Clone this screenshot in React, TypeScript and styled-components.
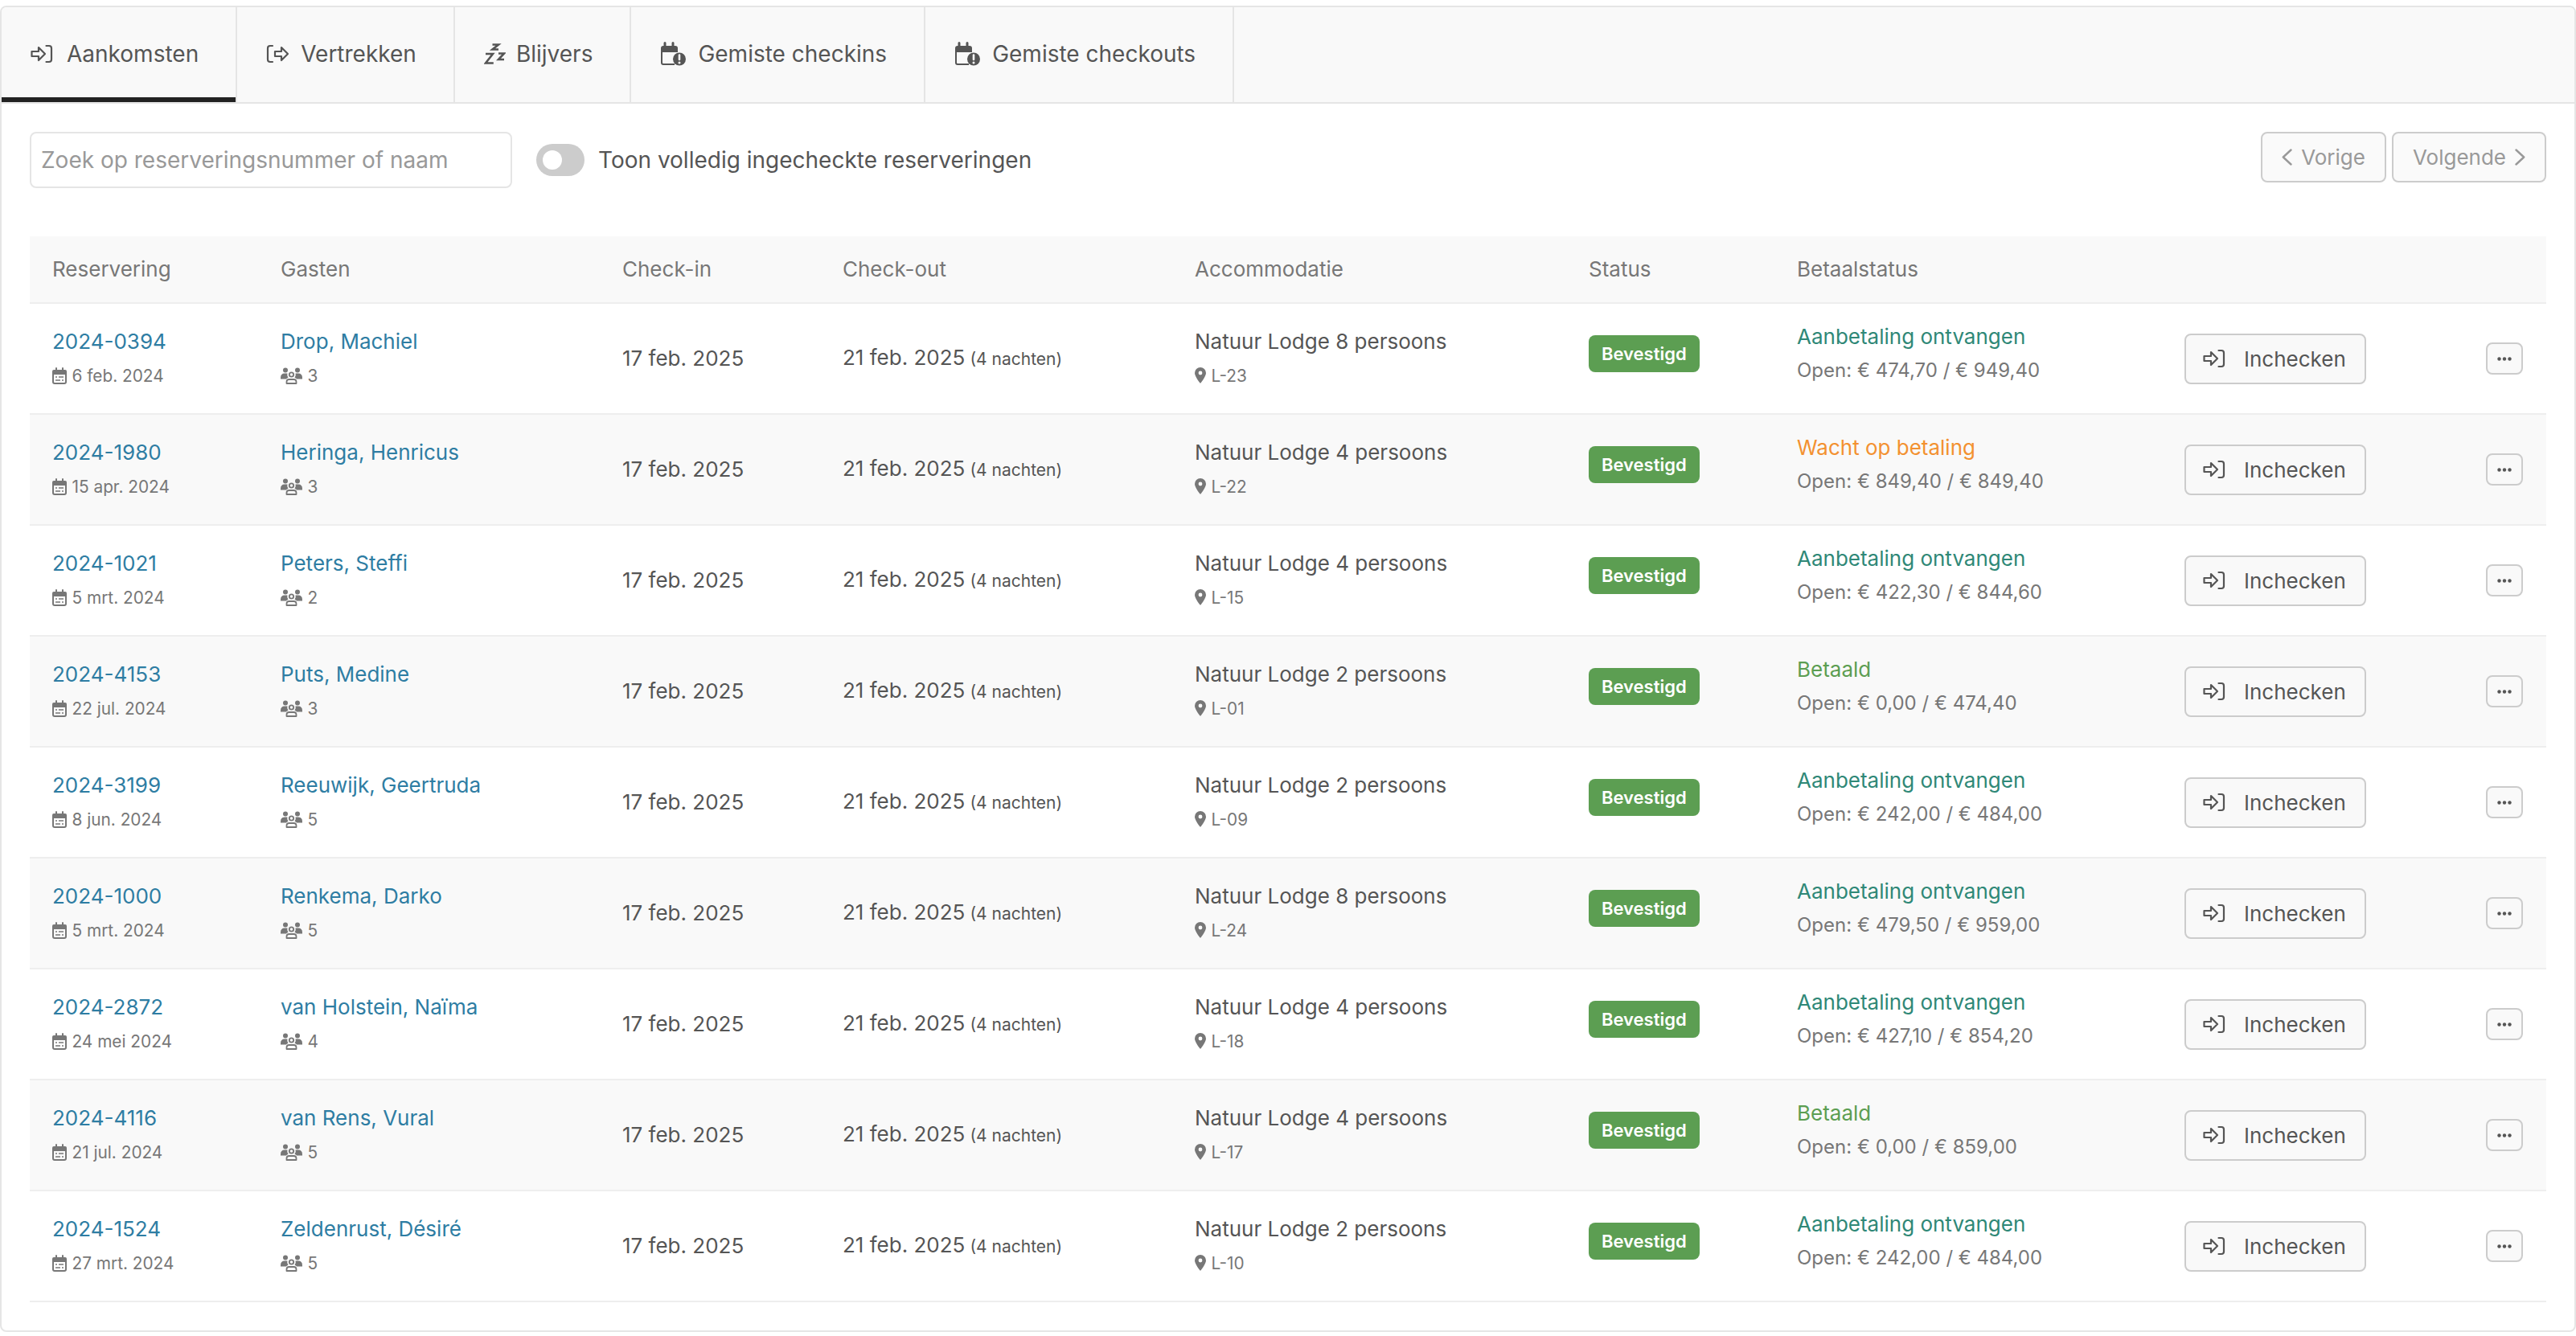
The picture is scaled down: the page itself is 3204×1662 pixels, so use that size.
import React from "react";
import styled, { createGlobalStyle } from "styled-components";

const Global = createGlobalStyle`
  html, body { margin: 0; padding: 0; background: #fff; }
  body { font-family: Inter, "Liberation Sans", sans-serif; color: #555; }
  * { box-sizing: border-box; }
`;

const Card = styled.div`
  margin-top: 7px;
  width: 3204px;
  height: 1650px;
  border: 2px solid #e5e5e5;
  border-radius: 8px;
  overflow: hidden;
`;

const TabBar = styled.nav`
  display: flex;
  height: 120px;
  background: #f9f9f9;
  border-bottom: 2px solid #e5e5e5;
`;

const Tab = styled.div<{ $active?: boolean; $gap: number }>`
  display: flex;
  align-items: center;
  gap: ${(p) => p.$gap}px;
  height: 118px;
  padding: 0 46px 2px 36px;
  font-size: 28px;
  color: #555;
  border-right: 2px solid #e5e5e5;
  box-shadow: ${(p) => (p.$active ? "inset 0 -6px 0 #222" : "none")};
`;

const Content = styled.div`
  padding: 35px 35px 0;
`;

const Toolbar = styled.div`
  display: flex;
  align-items: flex-start;
  justify-content: space-between;
  height: 130px;
`;

const Filters = styled.div`
  display: flex;
  align-items: center;
  height: 70px;
`;

const SearchBox = styled.div`
  width: 600px;
  height: 70px;
  padding: 0 12px;
  display: flex;
  align-items: center;
  border: 2px solid #e5e5e5;
  border-radius: 8px;
  font-size: 28px;
  color: #999;
`;

const Toggle = styled.div`
  position: relative;
  width: 60px;
  height: 40px;
  margin: 0 17px 0 30px;
  border-radius: 20px;
  background: #ccc;
  &::after {
    content: "";
    position: absolute;
    left: 8px;
    top: 8px;
    width: 24px;
    height: 24px;
    border-radius: 50%;
    background: #fff;
  }
`;

const ToggleLabel = styled.span`
  font-size: 28px;
  color: #555;
`;

const Pager = styled.div`
  display: flex;
  gap: 7px;
`;

const PagerButton = styled.div`
  display: flex;
  align-items: center;
  gap: 11px;
  height: 63px;
  padding: 0 24px;
  border: 2px solid #ccc;
  border-radius: 8px;
  background: #fafafa;
  font-size: 26px;
  color: #999;
`;

const columns = "284px 425px 274px 438px 490px 259px 1fr";

const HeadRow = styled.div`
  display: grid;
  grid-template-columns: ${columns};
  align-items: center;
  height: 84px;
  padding-bottom: 2px;
  background: #f9f9f9;
  border-bottom: 2px solid #eee;
  font-size: 26px;
  color: #777;
`;

const HeadCell = styled.div`
  padding-left: 28px;
`;

const Row = styled.div<{ $even: boolean }>`
  display: grid;
  grid-template-columns: ${columns};
  align-items: center;
  height: 138px;
  background: ${(p) => (p.$even ? "#f9f9f9" : "#fff")};
  border-bottom: 2px solid #eee;
`;

const Cell = styled.div`
  padding-left: 28px;
  min-width: 0;
`;

const StatusCell = styled(Cell)`
  display: flex;
  padding-bottom: 12px;
`;

const PayCell = styled.div`
  display: flex;
  flex-direction: column;
  padding: 0 0 12px 28px;
`;

const PayGroup = styled.div`
  display: grid;
  grid-template-columns: 482px 1fr;
  align-items: center;
`;

const ActionCell = styled.div`
  display: flex;
  align-items: center;
  justify-content: space-between;
  padding: 0 29px 0 28px;
`;

const Main = styled.div`
  font-size: 26px;
  line-height: 42px;
  color: #555;
  white-space: nowrap;
`;

const LinkText = styled(Main)`
  color: #2e7da3;
`;

const Pay = styled(Main)<{ $kind: string }>`
  color: ${(p) => (p.$kind === "wait" ? "#f39130" : p.$kind === "paid" ? "#5c9e52" : "#2f8877")};
`;

const Sub = styled.div`
  display: flex;
  align-items: center;
  gap: 6.5px;
  height: 42px;
  font-size: 20.8px;
  color: #777;
  white-space: nowrap;
`;

const PayOpen = styled.div`
  font-size: 24px;
  line-height: 42px;
  color: #777;
  white-space: nowrap;
`;

const Nights = styled.span`
  margin-left: 6px;
  font-size: 21px;
  color: #555;
`;

const Badge = styled.span`
  display: inline-flex;
  align-items: center;
  height: 46px;
  padding: 0 16px;
  border-radius: 8px;
  background: #5c9e52;
  color: #fff;
  font-size: 22px;
  font-weight: 600;
`;

const CheckIn = styled.div`
  display: flex;
  align-items: center;
  gap: 23px;
  width: 226px;
  height: 63px;
  padding-left: 21px;
  border: 2px solid #ccc;
  border-radius: 8px;
  background: #f9f9f9;
  font-size: 26px;
  color: #555;
`;

const More = styled.div`
  display: flex;
  align-items: center;
  justify-content: center;
  width: 46px;
  height: 40px;
  border: 2px solid #ccc;
  border-radius: 8px;
  background: #f9f9f9;
`;

const SignInIcon = () => (
  <svg width="28" height="24" viewBox="0 0 28 24" fill="none" stroke="#555" strokeWidth="2.2" strokeLinejoin="round" strokeLinecap="round">
    <path d="M1.5 9H10V4L18 12L10 20V15H1.5Z" />
    <path d="M19.5 2H23Q26 2 26 5V19Q26 22 23 22H19.5" />
  </svg>
);

const SignOutIcon = () => (
  <svg width="29" height="24" viewBox="0 0 29 24" fill="none" stroke="#555" strokeWidth="2.2" strokeLinejoin="round" strokeLinecap="round">
    <path d="M8 2H5Q2 2 2 5V19Q2 22 5 22H8" />
    <path d="M11 9H19V4L27 12L19 20V15H11Z" />
  </svg>
);

const ZzzIcon = () => (
  <svg width="27" height="28" viewBox="0 0 27 28" fill="none" stroke="#555" strokeWidth="2.6" strokeLinejoin="miter">
    <path d="M2 14H11L2 25.5H11.8" />
    <path d="M18 13.5H25L18 21H25" />
    <path d="M10.5 2.5H18L10.5 8.5H18" />
  </svg>
);

const CalendarAlertIcon = () => (
  <svg width="32" height="30" viewBox="0 0 32 30">
    <path d="M6 1.5V6M16 1.5V6" stroke="#555" strokeWidth="3" strokeLinecap="round" />
    <path d="M1 8a3 3 0 0 1 3-3h15a3 3 0 0 1 3 3v5H1Z" fill="#555" />
    <path d="M2 12V26a2 2 0 0 0 2 2H18" fill="none" stroke="#555" strokeWidth="2" />
    <circle cx="24" cy="21.5" r="8" fill="#555" />
    <path d="M24 16.5V22" stroke="#f9f9f9" strokeWidth="2.6" strokeLinecap="round" />
    <circle cx="24" cy="26" r="1.5" fill="#f9f9f9" />
  </svg>
);

const SmallCalendar = () => (
  <svg width="18" height="21" viewBox="0 0 18 21">
    <path d="M5 1V4M13 1V4" stroke="#777" strokeWidth="2" strokeLinecap="round" />
    <path d="M0 5a2 2 0 0 1 2-2h14a2 2 0 0 1 2 2v4H0Z" fill="#777" />
    <rect x="1" y="7" width="16" height="13" rx="2" fill="none" stroke="#777" strokeWidth="2" />
    <path d="M4 12H6M8 12H14M4 16H10M12 16H14" stroke="#777" strokeWidth="1.6" />
  </svg>
);

const GroupIcon = () => (
  <svg width="27" height="21" viewBox="0 0 27 21">
    <circle cx="6" cy="3.4" r="3" fill="#777" />
    <circle cx="21" cy="3.4" r="3" fill="#777" />
    <path d="M0 13q0-5.5 5-5.5h3.5q-1 3 1 5.5H9Q8 13 7 14.5H0Z" fill="#777" />
    <path d="M27 13q0-5.5-5-5.5h-3.5q1 3-1 5.5H18q1 0 2 1.5h7Z" fill="#777" />
    <circle cx="13.5" cy="9" r="2.7" fill="none" stroke="#777" strokeWidth="1.8" />
    <path d="M7.5 20V18q0-3 3-3h6q3 0 3 3v2Z" fill="none" stroke="#777" strokeWidth="1.8" strokeLinejoin="round" />
  </svg>
);

const PinIcon = () => (
  <svg width="14" height="20" viewBox="0 0 14 20">
    <path fillRule="evenodd" d="M7 0a7 7 0 0 1 7 7c0 3.6-4.4 9.7-6.2 12.1a1 1 0 0 1-1.6 0C4.4 16.7 0 10.6 0 7a7 7 0 0 1 7-7Zm0 4.6a2.4 2.4 0 1 0 0 4.8 2.4 2.4 0 0 0 0-4.8Z" fill="#777" />
  </svg>
);

const ChevronLeft = () => (
  <svg width="13" height="21" viewBox="0 0 13 21" fill="none" stroke="#999" strokeWidth="2.4" strokeLinecap="round" strokeLinejoin="round">
    <path d="M11.5 1.5L1.8 10.5L11.5 19.5" />
  </svg>
);

const ChevronRight = () => (
  <svg width="13" height="21" viewBox="0 0 13 21" fill="none" stroke="#999" strokeWidth="2.4" strokeLinecap="round" strokeLinejoin="round">
    <path d="M1.5 1.5L11.2 10.5L1.5 19.5" />
  </svg>
);

const Dots = () => (
  <svg width="18" height="5" viewBox="0 0 18 5" fill="#555">
    <circle cx="2.5" cy="2.5" r="2.2" />
    <circle cx="9" cy="2.5" r="2.2" />
    <circle cx="15.5" cy="2.5" r="2.2" />
  </svg>
);

type Res = {
  id: string;
  booked: string;
  guest: string;
  count: number;
  lodge: number;
  lot: string;
  pay: "dep" | "wait" | "paid";
  open: string;
};

const rows: Res[] = [
  { id: "2024-0394", booked: "6 feb. 2024", guest: "Drop, Machiel", count: 3, lodge: 8, lot: "L-23", pay: "dep", open: "€ 474,70 / € 949,40" },
  { id: "2024-1980", booked: "15 apr. 2024", guest: "Heringa, Henricus", count: 3, lodge: 4, lot: "L-22", pay: "wait", open: "€ 849,40 / € 849,40" },
  { id: "2024-1021", booked: "5 mrt. 2024", guest: "Peters, Steffi", count: 2, lodge: 4, lot: "L-15", pay: "dep", open: "€ 422,30 / € 844,60" },
  { id: "2024-4153", booked: "22 jul. 2024", guest: "Puts, Medine", count: 3, lodge: 2, lot: "L-01", pay: "paid", open: "€ 0,00 / € 474,40" },
  { id: "2024-3199", booked: "8 jun. 2024", guest: "Reeuwijk, Geertruda", count: 5, lodge: 2, lot: "L-09", pay: "dep", open: "€ 242,00 / € 484,00" },
  { id: "2024-1000", booked: "5 mrt. 2024", guest: "Renkema, Darko", count: 5, lodge: 8, lot: "L-24", pay: "dep", open: "€ 479,50 / € 959,00" },
  { id: "2024-2872", booked: "24 mei 2024", guest: "van Holstein, Naïma", count: 4, lodge: 4, lot: "L-18", pay: "dep", open: "€ 427,10 / € 854,20" },
  { id: "2024-4116", booked: "21 jul. 2024", guest: "van Rens, Vural", count: 5, lodge: 4, lot: "L-17", pay: "paid", open: "€ 0,00 / € 859,00" },
  { id: "2024-1524", booked: "27 mrt. 2024", guest: "Zeldenrust, Désiré", count: 5, lodge: 2, lot: "L-10", pay: "dep", open: "€ 242,00 / € 484,00" },
];

const payLabel = { dep: "Aanbetaling ontvangen", wait: "Wacht op betaling", paid: "Betaald" };

export default function App() {
  return (
    <>
      <Global />
      <Card>
        <TabBar>
          <Tab $active $gap={17}><SignInIcon />Aankomsten</Tab>
          <Tab $gap={14}><SignOutIcon />Vertrekken</Tab>
          <Tab $gap={13}><ZzzIcon />Blijvers</Tab>
          <Tab $gap={15}><CalendarAlertIcon />Gemiste checkins</Tab>
          <Tab $gap={15}><CalendarAlertIcon />Gemiste checkouts</Tab>
        </TabBar>
        <Content>
          <Toolbar>
            <Filters>
              <SearchBox>Zoek op reserveringsnummer of naam</SearchBox>
              <Toggle />
              <ToggleLabel>Toon volledig ingecheckte reserveringen</ToggleLabel>
            </Filters>
            <Pager>
              <PagerButton><ChevronLeft />Vorige</PagerButton>
              <PagerButton>Volgende<ChevronRight /></PagerButton>
            </Pager>
          </Toolbar>
          <HeadRow>
            <HeadCell>Reservering</HeadCell>
            <HeadCell>Gasten</HeadCell>
            <HeadCell>Check-in</HeadCell>
            <HeadCell>Check-out</HeadCell>
            <HeadCell>Accommodatie</HeadCell>
            <HeadCell>Status</HeadCell>
            <HeadCell>Betaalstatus</HeadCell>
          </HeadRow>
          {rows.map((r, i) => (
            <Row key={r.id} $even={i % 2 === 1}>
              <Cell>
                <LinkText>{r.id}</LinkText>
                <Sub><SmallCalendar />{r.booked}</Sub>
              </Cell>
              <Cell>
                <LinkText>{r.guest}</LinkText>
                <Sub><GroupIcon />{r.count}</Sub>
              </Cell>
              <Cell><Main>17 feb. 2025</Main></Cell>
              <Cell><Main>21 feb. 2025<Nights>(4 nachten)</Nights></Main></Cell>
              <Cell>
                <Main>Natuur Lodge {r.lodge} persoons</Main>
                <Sub><PinIcon />{r.lot}</Sub>
              </Cell>
              <StatusCell><Badge>Bevestigd</Badge></StatusCell>
              <PayGroup>
                <PayCell>
                  <Pay $kind={r.pay}>{payLabel[r.pay]}</Pay>
                  <PayOpen>Open: {r.open}</PayOpen>
                </PayCell>
                <ActionCell>
                  <CheckIn><SignInIcon />Inchecken</CheckIn>
                  <More><Dots /></More>
                </ActionCell>
              </PayGroup>
            </Row>
          ))}
        </Content>
      </Card>
    </>
  );
}
